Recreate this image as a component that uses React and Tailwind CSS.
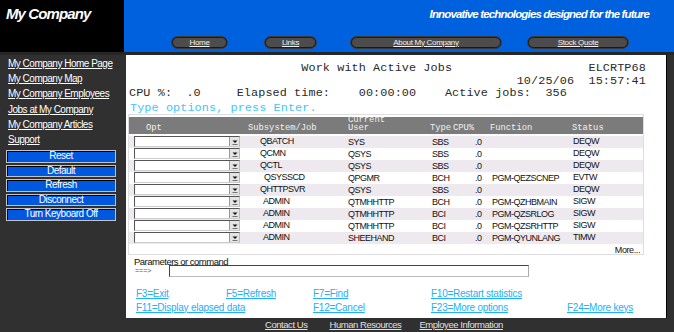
import React from 'react';

const sans = "font-['Liberation_Sans',Arial,sans-serif]";
const mono = "font-['Liberation_Mono','Courier_New',monospace]";

const sideLinks = [
  'My Company Home Page',
  'My Company Map',
  'My Company Employees',
  'Jobs at My Company',
  'My Company Articles',
  'Support'
];

const sideButtons = ['Reset', 'Default', 'Refresh', 'Disconnect', 'Turn Keyboard Off'];

const jobs = [
  { job: 'QBATCH', pad: 'pl-[20px]', user: 'SYS', type: 'SBS', fn: '', status: 'DEQW' },
  { job: 'QCMN', pad: 'pl-[20px]', user: 'QSYS', type: 'SBS', fn: '', status: 'DEQW' },
  { job: 'QCTL', pad: 'pl-[20px]', user: 'QSYS', type: 'SBS', fn: '', status: 'DEQW' },
  { job: 'QSYSSCD', pad: 'pl-[24px]', user: 'QPGMR', type: 'BCH', fn: 'PGM-QEZSCNEP', status: 'EVTW' },
  { job: 'QHTTPSVR', pad: 'pl-[20px]', user: 'QSYS', type: 'SBS', fn: '', status: 'DEQW' },
  { job: 'ADMIN', pad: 'pl-[23px]', user: 'QTMHHTTP', type: 'BCH', fn: 'PGM-QZHBMAIN', status: 'SIGW' },
  { job: 'ADMIN', pad: 'pl-[23px]', user: 'QTMHHTTP', type: 'BCI', fn: 'PGM-QZSRLOG', status: 'SIGW' },
  { job: 'ADMIN', pad: 'pl-[23px]', user: 'QTMHHTTP', type: 'BCI', fn: 'PGM-QZSRHTTP', status: 'SIGW' },
  { job: 'ADMIN', pad: 'pl-[23px]', user: 'SHEEHAND', type: 'BCI', fn: 'PGM-QYUNLANG', status: 'TIMW' }
];

function Pill({ label, className }) {
  return (
    <div
      className={`h-[11px] rounded-full bg-[#4c4c4c] border border-[#1a1a1a] shadow-[0_0_0_1px_#3a3a3a] flex items-center justify-center ${className}`}
    >
      <span className={`${sans} text-[8px] leading-none tracking-[-0.3px] text-[#eeeeee] underline`}>{label}</span>
    </div>
  );
}

function OptSelect() {
  return (
    <div className="w-[106px] h-[11px] bg-white border border-[#555] border-r-[#bbb] border-b-[#ccc] flex justify-end">
      <div className="w-[10px] h-full bg-[#e4e4e4] border-l border-[#999] flex flex-col items-center justify-center">
        <svg width="6" height="6" viewBox="0 0 6 6">
          <path d="M0.5 1.5 L5.5 1.5 L3 4 Z" fill="#111" />
          <path d="M0.5 5.5 L5.5 5.5" stroke="#555" strokeWidth="0.8" />
        </svg>
      </div>
    </div>
  );
}

export default function App() {
  return (
    <div className="w-[674px] h-[332px] flex flex-col bg-[#303030] overflow-hidden">
      {/* Header */}
      <div className="h-[52px] flex">
        <div className="w-[124px] bg-black pl-[6px] pt-[5px]">
          <div className={`${sans} text-white font-bold italic text-[15px] leading-[17px] tracking-[-0.9px]`}>My Company</div>
        </div>
        <div className="flex-1 bg-[#0061df] flex flex-col">
          <div className="h-[29px] flex justify-end items-start pt-[7px] pr-[25px]">
            <span className={`${sans} text-white font-bold italic text-[11.5px] leading-[14px] tracking-[-0.85px]`}>
              Innovative technologies designed for the future
            </span>
          </div>
          <div className="flex mt-[8px]">
            <Pill label="Home" className="ml-[48px] w-[55px]" />
            <Pill label="Links" className="ml-[38px] w-[51px]" />
            <Pill label="About My Company" className="ml-[35px] w-[150px]" />
            <Pill label="Stock Quote" className="ml-[27px] w-[100px]" />
          </div>
        </div>
      </div>
      <div className="h-[3px] bg-[#262626]" />

      {/* Middle */}
      <div className="h-[263px] flex">
        <div className="w-[126px] bg-[#303030] flex flex-col pt-[1px]">
          {sideLinks.map((l) => (
            <div key={l} className={`${sans} h-[15.2px] leading-[15px] pl-[8px] text-[10px] tracking-[-0.5px] text-white underline`}>
              {l}
            </div>
          ))}
          <div className="flex flex-col gap-[2px] mt-[3px] pl-[6px]">
            {sideButtons.map((b) => (
              <div
                key={b}
                className="w-[110px] h-[12.5px] bg-[#0057e0] border border-[#c4c4c4] shadow-[inset_1px_1px_0_#000] flex items-center justify-center"
              >
                <span className={`${sans} text-[10px] leading-none tracking-[-0.5px] text-white`}>{b}</span>
              </div>
            ))}
          </div>
        </div>

        <div className="w-[541px] bg-white border-r border-black flex flex-col pl-[2px] pt-[7px]">
          <div className={`${mono} text-[11.8px] leading-[12.5px] text-[#2a2a2a] pl-[1px] whitespace-pre tracking-[0.1px]`}>
            <div>{'                        Work with Active Jobs                   ELCRTP68'}</div>
            <div>{'                                                      10/25/06  15:57:41'}</div>
            <div>{'CPU %:  .0     Elapsed time:    00:00:00    Active jobs:  356'}</div>
          </div>
          <div className={`${mono} text-[11.8px] leading-[12px] text-[#3ec6ff] pl-[2px] mt-[2px] whitespace-pre tracking-[0.1px]`}>
            Type options, press Enter.
          </div>

          {/* Table */}
          <div className="w-[516px] h-[141px] border border-[#dddddd] py-[2px] flex flex-col">
            <div className={`${mono} h-[17px] bg-[#7b7b7b] text-[8.8px] leading-[8.5px] text-[#f2f2f2] flex items-end pb-[1px]`}>
              <div className="w-[111px] pl-[17px]">Opt</div>
              <div className="w-[108px] pl-[8px]">Subsystem/Job</div>
              <div className="w-[82px] flex flex-col">
                <span>Current</span>
                <span>User</span>
              </div>
              <div className="w-[22px]">Type</div>
              <div className="w-[38px] pl-[1px]">CPU%</div>
              <div className="w-[82px]">Function</div>
              <div className="flex-1">Status</div>
            </div>
            <div className="mt-[2px] flex flex-col">
              {jobs.map((r, i) => (
                <div
                  key={i}
                  className={`h-[12px] flex items-center ${sans} text-[9px] leading-none tracking-[-0.5px] text-[#111] ${
                    i % 2 === 0 ? 'bg-[#eee9ef]' : 'bg-white'
                  }`}
                >
                  <div className="w-[5px]" />
                  <OptSelect />
                  <div className={`w-[108px] ${r.pad}`}>{r.job}</div>
                  <div className="w-[82px] pt-[1px]">{r.user}</div>
                  <div className="w-[22px] pl-[2px] pt-[1px]">{r.type}</div>
                  <div className="w-[38px] pl-[23px] pt-[1px]">.0</div>
                  <div className="w-[82px] pl-[2px] pt-[1px]">{r.fn}</div>
                  <div className="flex-1 pl-[1px] pb-[1px]">{r.status}</div>
                </div>
              ))}
            </div>
            <div className={`${sans} text-[9px] leading-[10px] tracking-[-0.4px] text-[#111] text-right pr-[3px] mt-[1px]`}>More...</div>
          </div>

          {/* Command line */}
          <div className={`${sans} text-[9.5px] leading-[9px] tracking-[-0.5px] text-[#111] pl-[6px] mt-[2px]`}>Parameters or command</div>
          <div className="flex items-center pl-[7px] -mt-[1px]">
            <span className={`${sans} w-[34px] text-[7px] leading-none text-[#555]`}>===&gt;</span>
            <div className="w-[360px] h-[12px] bg-white border border-[#444] border-r-[#aaa] border-b-[#bbb]" />
          </div>

          {/* Function keys */}
          <div className={`${sans} mt-[10px] pl-[8px] grid grid-cols-[90px_87px_118px_136px_1fr] text-[10px] leading-[14px] tracking-[-0.25px] text-[#22afff] underline`}>
            <span>F3=Exit</span>
            <span>F5=Refresh</span>
            <span>F7=Find</span>
            <span className="col-span-2">F10=Restart statistics</span>
            <span className="col-span-2">F11=Display elapsed data</span>
            <span>F12=Cancel</span>
            <span>F23=More options</span>
            <span>F24=More keys</span>
          </div>
        </div>

        <div className="flex-1 bg-[#303030]" />
      </div>

      {/* Footer */}
      <div className={`h-[14px] flex items-center ${sans} text-[9.5px] leading-none tracking-[-0.45px] text-[#e0e0e0] underline`}>
        <span className="ml-[265px]">Contact Us</span>
        <span className="ml-[22px]">Human Resources</span>
        <span className="ml-[18px]">Employee Information</span>
      </div>
    </div>
  );
}
